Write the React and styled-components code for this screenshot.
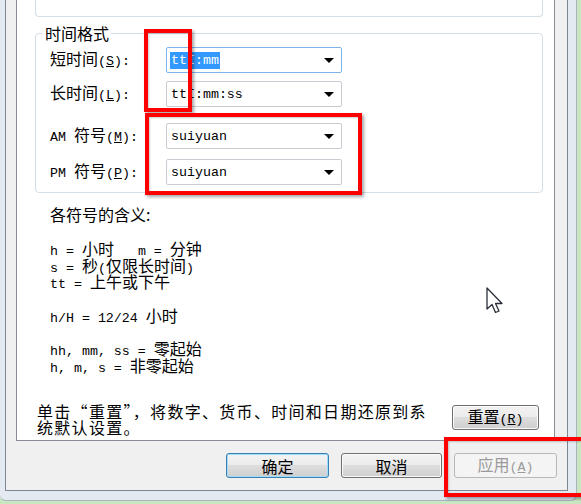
import React from 'react'
import styled, { createGlobalStyle } from 'styled-components'

const GlobalStyle = createGlobalStyle`
  html, body {
    margin: 0;
    padding: 0;
    overflow: hidden;
  }
  body {
    background: #c8e6c0;
    font-family: "Noto Sans CJK SC", sans-serif;
    color: #000;
  }
`

const Frame = styled.div`
  position: relative;
  width: 577px;
  height: 501px;
  box-sizing: border-box;
  padding: 0 8px 9px 5px;
  background: #e3eaf2;
  border-right: 1px solid #aab4bf;
  border-bottom: 1px solid #aab4bf;
  border-radius: 0 0 6px 6px;
`

const Client = styled.div`
  height: 491px;
  box-sizing: border-box;
  display: flex;
  flex-direction: column;
  background: #f0f0f0;
  border: 1px solid #7d8894;
  border-top: none;
`

const TabPage = styled.div`
  height: 441px;
  box-sizing: border-box;
  margin: 0 12px 0 10px;
  background: #fff;
  border: 1px solid #898c95;
  border-top: none;
  display: flex;
  flex-direction: column;
`

const PrevGroup = styled.div`
  height: 17px;
  box-sizing: border-box;
  margin: 0 11px 0 18px;
  border: 1px solid #d5dfe5;
  border-top: none;
  border-radius: 0 0 4px 4px;
`

const Group = styled.fieldset`
  margin: 7px 11px 0 18px;
  padding: 0 14px 7px 14px;
  border: 1px solid #d5dfe5;
  border-radius: 4px;
  min-inline-size: 0;

  legend {
    padding: 0 2px;
    margin-left: -7px;
    font-size: 16px;
    line-height: 18px;
  }
`

const Row = styled.div`
  display: flex;
  align-items: center;
  margin-top: ${p => p.$gap}px;
`

const Label = styled.div`
  width: 116px;
  font-size: 16px;
  line-height: 20px;
  white-space: nowrap;
`

const Lat = styled.span`
  font-family: "Liberation Mono", monospace;
  font-size: 13.3px;
`

const Combo = styled.div`
  width: 176px;
  height: 26px;
  box-sizing: border-box;
  display: flex;
  align-items: center;
  justify-content: space-between;
  padding: 0 7px 0 3px;
  border: 1px solid ${p => (p.$focus ? '#7eb4ea' : '#c9ccd2')};
  border-radius: 2px;
  background: #fff;
`

const Value = styled.span`
  font-family: "Liberation Mono", monospace;
  font-size: 13.3px;
  line-height: 17px;
  padding: 0 1px;
  background: ${p => (p.$selected ? '#3399ff' : 'transparent')};
  color: ${p => (p.$selected ? '#fff' : '#000')};
`

const Arrow = styled.span`
  width: 0;
  height: 0;
  border-left: 5px solid transparent;
  border-right: 5px solid transparent;
  border-top: 5px solid #000;
`

const Heading = styled.div`
  margin: 11px 0 0 33px;
  font-size: 16px;
  line-height: 20px;
`

const Legend = styled.div`
  margin: 16px 0 0 33px;
  font-size: 16px;
`

const Line = styled.div`
  height: ${p => p.$h}px;
  line-height: ${p => p.$h}px;
  white-space: pre;
  overflow: visible;
`

const Footer = styled.div`
  margin-top: auto;
  display: flex;
  align-items: flex-start;
  padding: 0 15px 5px 20px;
`

const Note = styled.div`
  flex: 1;
  font-size: 16px;
  letter-spacing: 1.3px;
`

const Button = styled.button`
  width: ${p => p.$w}px;
  height: 25px;
  margin-top: ${p => p.$top || 0}px;
  padding: 0;
  box-sizing: border-box;
  font-family: "Noto Sans CJK SC", sans-serif;
  font-size: 16px;
  line-height: 20px;
  color: ${p => (p.disabled ? '#9a9a9a' : '#000')};
  border: 1px solid ${p => (p.$default ? '#3c7fb1' : p.disabled ? '#b5b9bc' : '#707070')};
  border-radius: 3px;
  background: ${p =>
    p.disabled
      ? '#f4f4f4'
      : 'linear-gradient(#f3f3f3 0%, #ebebeb 49%, #dddddd 50%, #cfcfcf 100%)'};
  box-shadow: inset 0 0 0 1px ${p => (p.$default ? '#9fdcf8' : p.disabled ? '#f4f4f4' : '#fbfbfb')};
`

const ButtonBar = styled.div`
  display: flex;
  justify-content: flex-end;
  gap: 12px;
  padding: 12px 10px 0 0;
`

const Mark = styled.div`
  position: absolute;
  box-sizing: border-box;
  border: 4px solid #ff0000;
  box-shadow: 2px 2px 3px rgba(0, 0, 0, 0.35), inset 1px 1px 2px rgba(0, 0, 0, 0.2);
  pointer-events: none;
`

const Cursor = styled.svg`
  position: absolute;
  left: 486px;
  top: 287px;
`

// split text into latin runs (mono) and han runs
function mixed(text) {
  return text.split(/([\x00-\x7F]+)/).filter(Boolean).map((part, i) =>
    /^[\x00-\x7F]+$/.test(part) ? <Lat key={i}>{part}</Lat> : <span key={i}>{part}</span>
  )
}

function FieldLabel({ text, accel }) {
  return (
    <Label>
      {mixed(text)}
      <Lat>(<u>{accel}</u>):</Lat>
    </Label>
  )
}

const rows = [
  { label: '短时间', accel: 'S', value: 'ttI:mm', gap: 5, focus: true },
  { label: '长时间', accel: 'L', value: 'ttI:mm:ss', gap: 8 },
  { label: 'AM 符号', accel: 'M', value: 'suiyuan', gap: 16 },
  { label: 'PM 符号', accel: 'P', value: 'suiyuan', gap: 10 },
]

const legendLines = [
  'h = 小时   m = 分钟',
  's = 秒(仅限长时间)',
  'tt = 上午或下午',
  '',
  'h/H = 12/24 小时',
  '',
  'hh, mm, ss = 零起始',
  'h, m, s = 非零起始',
]

export default function App() {
  return (
    <>
      <GlobalStyle />
      <Frame>
        <Client>
          <TabPage>
            <PrevGroup />
            <Group>
              <legend>时间格式</legend>
              {rows.map(r => (
                <Row key={r.accel} $gap={r.gap}>
                  <FieldLabel text={r.label} accel={r.accel} />
                  <Combo $focus={r.focus}>
                    <Value $selected={r.focus}>{r.value}</Value>
                    <Arrow />
                  </Combo>
                </Row>
              ))}
            </Group>
            <Heading>各符号的含义:</Heading>
            <Legend>
              {legendLines.map((l, i) => (
                <Line key={i} $h={16.7}>{mixed(l)}</Line>
              ))}
            </Legend>
            <Footer>
              <Note>
                <Line $h={16}>单击“重置”，将数字、货币、时间和日期还原到系</Line>
                <Line $h={16}>统默认设置。</Line>
              </Note>
              <Button $w={87} $top={2}>
                重置<Lat>(<u>R</u>)</Lat>
              </Button>
            </Footer>
          </TabPage>
          <ButtonBar>
            <Button $w={103} $default>确定</Button>
            <Button $w={101}>取消</Button>
            <Button $w={103} disabled>
              应用<Lat>(<u>A</u>)</Lat>
            </Button>
          </ButtonBar>
        </Client>
        <Mark style={{ left: 144, top: 29, width: 48, height: 83 }} />
        <Mark style={{ left: 145, top: 113, width: 217, height: 82 }} />
        <Mark style={{ left: 444, top: 437, width: 160, height: 60 }} />
        <Cursor width="18" height="28" viewBox="0 0 18 28">
          <path
            d="M1 1 L1 22 L6 17.5 L9.5 25.5 L13 24 L9.5 16.5 L16 16.5 Z"
            fill="#fff"
            stroke="#2b2f3a"
            strokeWidth="1.3"
            strokeLinejoin="round"
          />
        </Cursor>
      </Frame>
    </>
  )
}
